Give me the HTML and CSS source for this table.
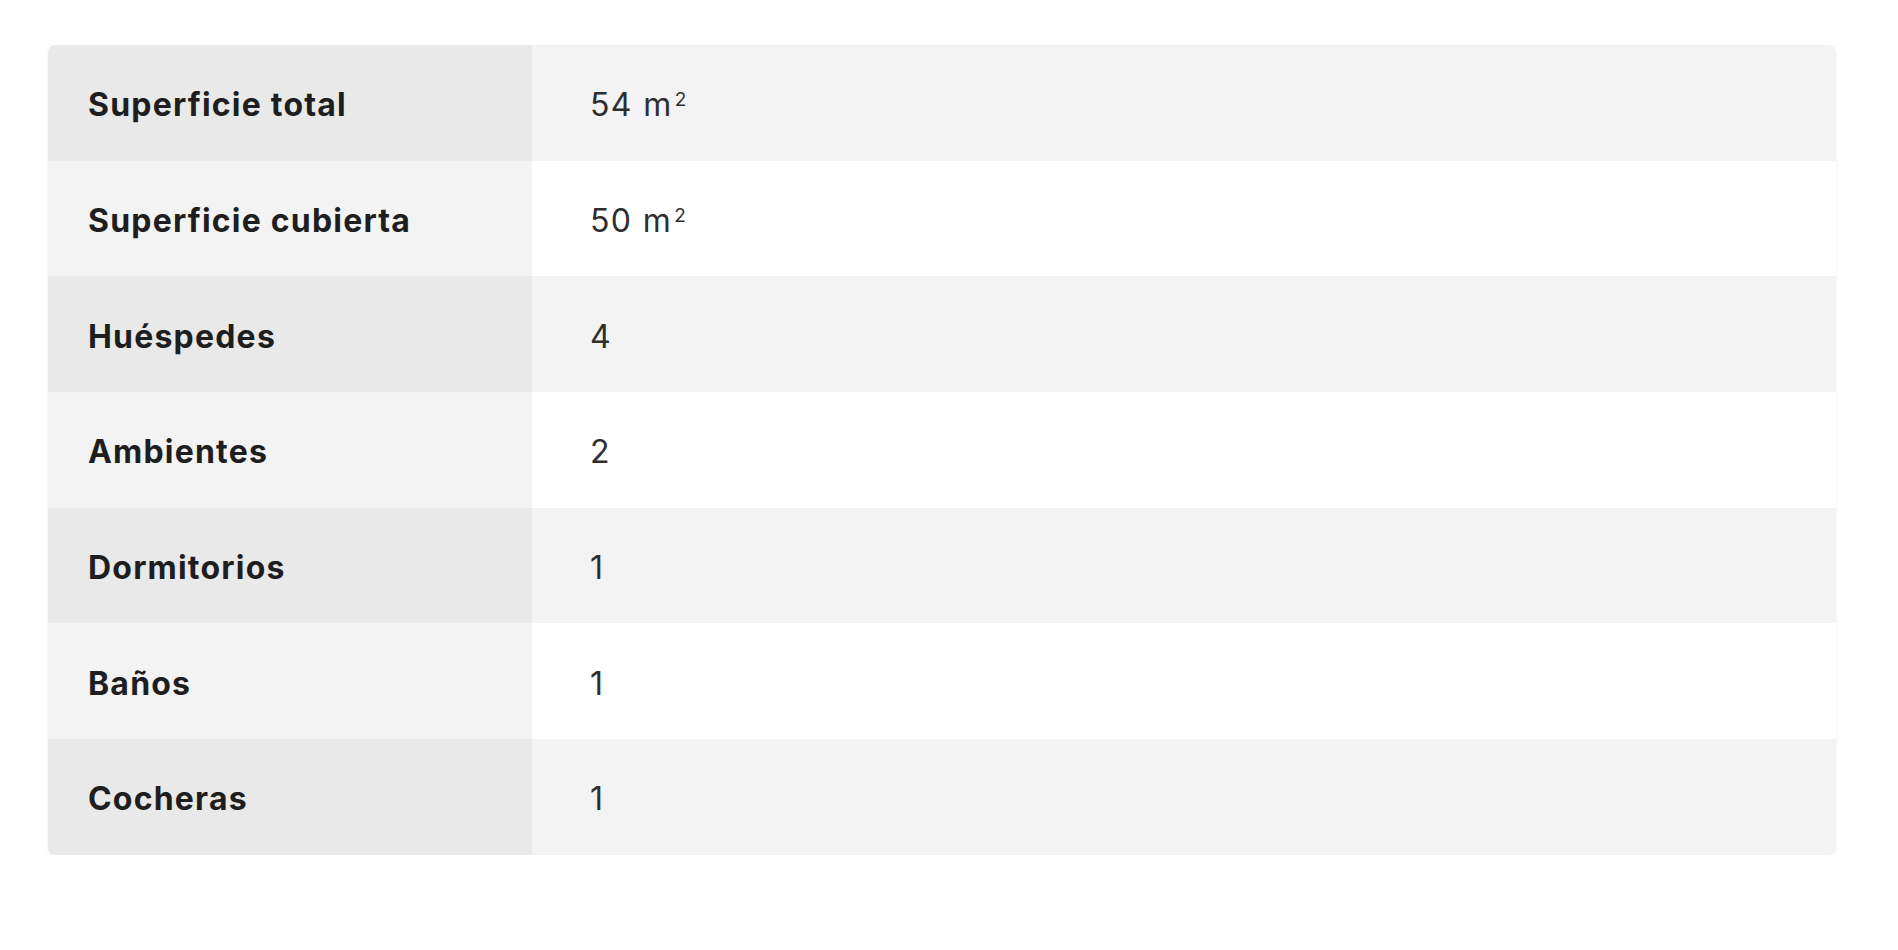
FILE: index.html
```html
<!DOCTYPE html>
<html lang="es">
<head>
<meta charset="utf-8">
<title>Características</title>
<link rel="stylesheet" href="styles.css">
</head>
<body>
<div class="page">
  <div class="specs">
    <div class="row odd"><div class="label">Superficie total</div><div class="value">54 m<sup>2</sup></div></div>
    <div class="row even"><div class="label">Superficie cubierta</div><div class="value">50 m<sup>2</sup></div></div>
    <div class="row odd"><div class="label">Huéspedes</div><div class="value">4</div></div>
    <div class="row even"><div class="label">Ambientes</div><div class="value">2</div></div>
    <div class="row odd"><div class="label">Dormitorios</div><div class="value">1</div></div>
    <div class="row even"><div class="label">Baños</div><div class="value">1</div></div>
    <div class="row odd"><div class="label">Cocheras</div><div class="value">1</div></div>
  </div>
</div>
</body>
</html>
```
FILE: styles.css
```css
html, body {
  margin: 0;
  padding: 0;
  background: #ffffff;
}
.page {
  padding: 45px 62px 0 48px;
  font-family: Inter, "Open Sans", "Liberation Sans", sans-serif;
}
.specs {
  border-radius: 8px;
  overflow: hidden;
  box-shadow: 0 1px 3px rgba(0, 0, 0, 0.08);
}
.row {
  display: grid;
  grid-template-columns: 484px 1fr;
  height: 115.7px;
}
.label, .value {
  display: flex;
  align-items: center;
  padding-top: 4px;
}
.label {
  padding-left: 40px;
  font-weight: 700;
  font-size: 32px;
  letter-spacing: 1.2px;
  color: #1e1e20;
}
.value {
  padding-left: 58px;
  font-weight: 400;
  font-size: 32px;
  letter-spacing: 1.4px;
  color: #2e2e2e;
}
.value sup {
  font-size: 19px;
  line-height: 1;
  letter-spacing: 0;
  align-self: flex-start;
  margin-top: 41px;
  margin-left: 2px;
}
.odd .label { background: #e9e9e9; }
.odd .value { background: #f3f3f3; }
.even .label { background: #f3f3f3; }
.even .value { background: #ffffff; }
```
